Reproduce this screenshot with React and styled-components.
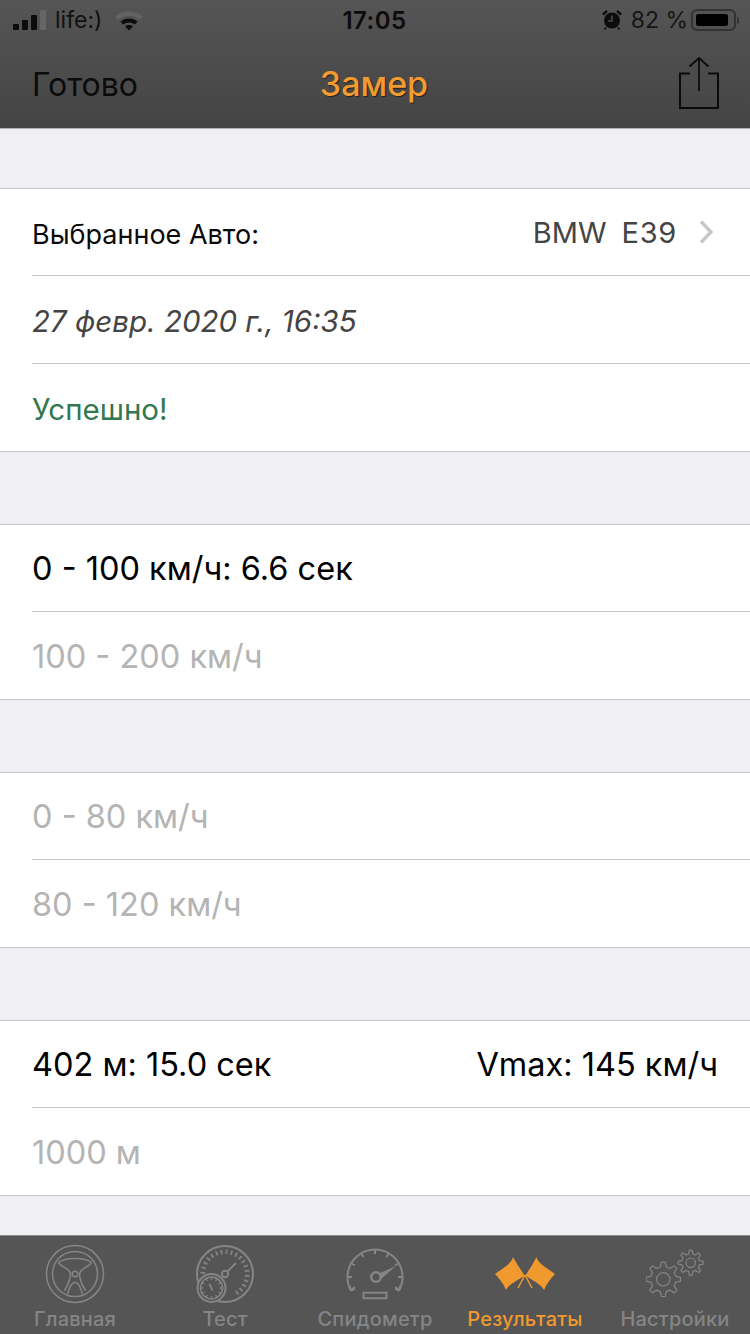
import styled, { createGlobalStyle } from "styled-components";

const GlobalStyle = createGlobalStyle`
  html, body {
    margin: 0;
    padding: 0;
    background: #efeff4;
  }
  * {
    box-sizing: border-box;
  }
`;

const polar = (cx, cy, r, deg) => {
  const a = (deg * Math.PI) / 180;
  return `${(cx + r * Math.cos(a)).toFixed(2)} ${(cy + r * Math.sin(a)).toFixed(2)}`;
};

// radial tick marks for the gauge icons
const ticks = (cx, cy, r1, r2, from, step, count) => {
  let d = "";
  for (let i = 0; i < count; i++) {
    const deg = from + i * step;
    d += `M${polar(cx, cy, r1, deg)}L${polar(cx, cy, r2, deg)}`;
  }
  return d;
};

const gear = (cx, cy, r, teeth, out) => {
  let d = "";
  const step = 360 / teeth;
  for (let i = 0; i < teeth; i++) {
    const a = i * step;
    d += `${i === 0 ? "M" : "L"}${polar(cx, cy, r, a - step * 0.3)} L${polar(cx, cy, out, a - step * 0.14)} L${polar(cx, cy, out, a + step * 0.14)} L${polar(cx, cy, r, a + step * 0.3)} `;
  }
  return d + "Z";
};

function StatusBar() {
  return (
    <Status>
      <StatusSide>
        <Signal>
          <Bar $h={6} />
          <Bar $h={10} />
          <Bar $h={15} />
          <Bar $h={20} $dim />
        </Signal>
        <Carrier>life:)</Carrier>
        <svg width="30" height="22" viewBox="0 0 30 22">
          <path d="M1 7.5C8.5 .8 21.5 .8 29 7.5L26 11C20 5.8 10 5.8 4 11Z" fill="#626262" />
          <path d="M6.5 12.7C11.5 8.4 18.5 8.4 23.5 12.7L20.8 15.6C17.3 12.8 12.7 12.8 9.2 15.6Z" fill="#0c0c0c" />
          <path d="M11 17.4C13.4 15.4 16.6 15.4 19 17.4L15 21.5Z" fill="#0c0c0c" />
        </svg>
      </StatusSide>
      <Clock>17:05</Clock>
      <StatusRight>
        <svg width="20" height="22" viewBox="0 0 20 22">
          <circle cx="10" cy="11.5" r="8" fill="#0c0c0c" />
          <path d="M10 6.5V12H6" stroke="#4b4b4b" strokeWidth="1.6" fill="none" />
          <path d="M1 5.5L5 1.8M19 5.5L15 1.8" stroke="#0c0c0c" strokeWidth="2.4" />
          <path d="M4 18.5L2.5 20.5M16 18.5L17.5 20.5" stroke="#0c0c0c" strokeWidth="1.6" />
        </svg>
        <Percent>82 %</Percent>
        <Battery>
          <BatteryFill />
        </Battery>
        <BatteryCap />
      </StatusRight>
    </Status>
  );
}

function WheelIcon() {
  return (
    <svg width="60" height="60" viewBox="0 0 60 60" fill="none" stroke="#858585" strokeWidth="1.5">
      <circle cx="30" cy="30" r="28.5" />
      <circle cx="30" cy="30" r="22.5" />
      <circle cx="30" cy="30" r="2.8" />
      <path d="M13.3 18.7C20 13 40 13 46.7 18.7" />
      <path d="M13.3 18.7C17 23 22 24 24.3 27.3C25.5 29 25.5 32 25 34C24 39 22 43 19.3 46.7" />
      <path d="M46.7 18.7C43 23 38 24 35.7 27.3C34.5 29 34.5 32 35 34C36 39 38 43 40.7 46.7" />
      <path d="M22.7 50C24 44 27 39 30 38.3C33 39 36 44 37.3 50" />
    </svg>
  );
}

function TestIcon() {
  return (
    <svg width="60" height="60" viewBox="0 0 60 60" fill="none" stroke="#858585" strokeWidth="2">
      <circle cx="30" cy="30" r="28" />
      <path d={ticks(30, 30, 20, 24.5, -190, 13, 20)} strokeWidth="1.8" />
      <circle cx="30" cy="30" r="3.2" />
      <path d="M32.5 27.5L41 19" strokeWidth="1.8" />
      <circle cx="16.5" cy="44" r="14" fill="#555" />
      <circle cx="16.5" cy="44" r="11" strokeWidth="1.5" />
      <path d={ticks(16.5, 44, 8.2, 10.5, 0, 30, 12)} strokeWidth="1.3" />
      <path d="M14.3 40L17.7 46.7" strokeWidth="1.8" />
    </svg>
  );
}

function SpeedIcon() {
  return (
    <svg width="60" height="54" viewBox="0 0 60 54" fill="none" stroke="#858585" strokeWidth="2">
      <path d="M6.2 43.75A27.5 27.5 0 1 1 53.8 43.75" />
      <path d={ticks(30, 30, 23, 27.5, -210, 30, 9)} />
      <path d="M6.2 43.75L4.5 38.5M6.2 43.75L9.5 40" />
      <path d="M53.8 43.75L55.5 38.5M53.8 43.75L50.5 40" />
      <circle cx="31" cy="30" r="4.8" strokeWidth="2.5" />
      <path d="M34 26.5L51 19L35.5 32.5Z" fill="#858585" stroke="none" />
      <rect x="18.5" y="45.7" width="23" height="5.5" />
    </svg>
  );
}

function FlagsIcon() {
  return (
    <svg width="60" height="34" viewBox="0 0 60 34">
      <g fill="#f0992e">
        <path d="M18 0C17 6 8 11 0 17C4 21 8 26 11 33C14 27 22 24 29.5 18.5C26 13 22 7 18 0Z" />
        <path d="M41.5 0C42.5 6 52 11 60 17C56 21 52 26 49 33C46 27 38 24 30.5 18.5C34 13 38 7 41.5 0Z" />
      </g>
      <path d="M30 18L37 31M30 18L23 31" stroke="#f0992e" strokeWidth="1.5" />
    </svg>
  );
}

function GearsIcon() {
  return (
    <svg width="58" height="50" viewBox="0 0 58 50" fill="none" stroke="#858585" strokeWidth="1.2">
      <path d={gear(17.3, 30.3, 12.7, 8, 17.3)} strokeLinejoin="round" />
      <circle cx="17.3" cy="30.3" r="6.7" />
      <path d={gear(44.7, 13.7, 9, 8, 12.6)} strokeLinejoin="round" />
      <circle cx="44.7" cy="13.7" r="4.7" />
    </svg>
  );
}

export default function App() {
  return (
    <Page>
      <GlobalStyle />
      <Header>
        <StatusBar />
        <Nav>
          <NavDone>Готово</NavDone>
          <NavTitle>Замер</NavTitle>
          <ShareIcon width="40" height="54" viewBox="0 0 40 54" fill="none" stroke="#0a0a0a" strokeWidth="1.7">
            <path d="M11 17.5H1V52H39V17.5H29" strokeWidth="2" />
            <path d="M20 35V2M10.5 10.5L20 2L29.5 10.5" />
          </ShareIcon>
        </Nav>
      </Header>

      <Content>
        <Group $top={59}>
          <Row>
            <SmallLabel>Выбранное Авто:</SmallLabel>
            <CarValue>
              <CarName>BMW</CarName>
              <CarModel>E39</CarModel>
              <svg width="15" height="26" viewBox="0 0 15 26" fill="none" stroke="#c7c7cc" strokeWidth="3.4">
                <path d="M2 2.5L12 13L2 23.5" />
              </svg>
            </CarValue>
          </Row>
          <Row>
            <DateText>27 февр. 2020 г., 16:35</DateText>
          </Row>
          <Row>
            <SuccessText>Успешно!</SuccessText>
          </Row>
        </Group>

        <Group>
          <Row>
            <Metric>0 - 100 км/ч: 6.6 сек</Metric>
          </Row>
          <Row>
            <Metric $off>100 - 200 км/ч</Metric>
          </Row>
        </Group>

        <Group>
          <Row>
            <Metric $off>0 - 80 км/ч</Metric>
          </Row>
          <Row>
            <Metric $off>80 - 120 км/ч</Metric>
          </Row>
        </Group>

        <Group>
          <Row>
            <Metric>402 м: 15.0 сек</Metric>
            <Metric>Vmax: 145 км/ч</Metric>
          </Row>
          <Row>
            <Metric $off>1000 м</Metric>
          </Row>
        </Group>
      </Content>

      <TabBar>
        <Tab>
          <TabIcon><WheelIcon /></TabIcon>
          <TabLabel>Главная</TabLabel>
        </Tab>
        <Tab>
          <TabIcon><TestIcon /></TabIcon>
          <TabLabel>Тест</TabLabel>
        </Tab>
        <Tab>
          <TabIcon><SpeedIcon /></TabIcon>
          <TabLabel>Спидометр</TabLabel>
        </Tab>
        <Tab>
          <TabIcon><FlagsIcon /></TabIcon>
          <TabLabel $active>Результаты</TabLabel>
        </Tab>
        <Tab>
          <TabIcon><GearsIcon /></TabIcon>
          <TabLabel>Настройки</TabLabel>
        </Tab>
      </TabBar>
    </Page>
  );
}

const font = `Inter, "Noto Sans", "Liberation Sans", sans-serif`;

const Page = styled.div`
  width: 750px;
  height: 1334px;
  display: flex;
  flex-direction: column;
  overflow: hidden;
  background: #efeff4;
  font-family: ${font};
`;

const Header = styled.header`
  height: 129px;
  flex: none;
  background: linear-gradient(#555555, #444444);
  border-bottom: 1px solid #b2b2b2;
`;

const Status = styled.div`
  height: 40px;
  display: grid;
  grid-template-columns: 1fr auto 1fr;
  align-items: center;
  padding: 0 11px 0 13px;
`;

const StatusSide = styled.div`
  display: flex;
  align-items: center;
`;

const StatusRight = styled(StatusSide)`
  justify-content: flex-end;
`;

const Signal = styled.div`
  display: flex;
  align-items: flex-end;
  gap: 3px;
  height: 20px;
  margin-right: 9px;
`;

const Bar = styled.span`
  width: 6px;
  height: ${(p) => p.$h}px;
  border-radius: 1px;
  background: ${(p) => (p.$dim ? "#666666" : "#0c0c0c")};
`;

const Carrier = styled.span`
  font-size: 23px;
  color: #111;
  margin-right: 12px;
`;

const Clock = styled.span`
  margin-left: -3px;
  font-size: 24px;
  font-weight: 600;
  color: #0c0c0c;
  letter-spacing: 0.5px;
`;

const Percent = styled.span`
  font-size: 23px;
  color: #151515;
  margin: 0 3px 0 9px;
`;

const Battery = styled.span`
  width: 45px;
  height: 22px;
  padding: 3px;
  border: 2px solid #333;
  border-radius: 6px;
`;

const BatteryFill = styled.span`
  display: block;
  width: 32px;
  height: 12px;
  border-radius: 2px;
  background: #000;
`;

const BatteryCap = styled.span`
  width: 2px;
  height: 7px;
  margin-left: 1px;
  border-radius: 0 2px 2px 0;
  background: #333;
`;

const Nav = styled.nav`
  position: relative;
  height: 88px;
  display: flex;
  align-items: center;
  justify-content: space-between;
  padding: 0 31px 0 32px;
`;

const NavDone = styled.span`
  font-size: 32px;
  color: #0b0b0b;
`;

const NavTitle = styled.span`
  position: absolute;
  left: 0;
  right: 2px;
  top: 24px;
  text-align: center;
  font-size: 34px;
  font-weight: 500;
  line-height: 40px;
  color: #f39a30;
  text-shadow: 1px 1px 1px #222;
  pointer-events: none;
`;

const ShareIcon = styled.svg`
  margin-top: -3px;
`;

const Content = styled.main`
  flex: 1;
`;

const Group = styled.section`
  margin-top: ${(p) => p.$top ?? 72}px;
  padding-left: 32px;
  background: #fff;
  border-top: 1px solid #c8c8cc;
  border-bottom: 1px solid #c8c8cc;
`;

const Row = styled.div`
  height: 88px;
  display: flex;
  align-items: center;
  justify-content: space-between;
  padding: 2px 32px 0 0;
  border-bottom: 1px solid #c8c8cc;

  &:first-child {
    height: 87px;
    padding-top: 0;
  }

  &:last-child {
    height: 87px;
    border-bottom: none;
  }
`;

const SmallLabel = styled.span`
  margin-top: 4px;
  font-size: 27px;
  color: #0a0a0a;
`;

const CarValue = styled.div`
  display: flex;
  align-items: center;
  margin-right: 4px;
`;

const CarName = styled.span`
  font-size: 29px;
  color: #444;
  margin-right: 15px;
`;

const CarModel = styled(CarName)`
  letter-spacing: 0.7px;
  margin-right: 22px;
`;

const DateText = styled.span`
  font-size: 29.5px;
  font-style: italic;
  color: #444;
`;

const SuccessText = styled.span`
  font-size: 29.5px;
  color: #33784f;
`;

const Metric = styled.span`
  font-size: 32.5px;
  color: ${(p) => (p.$off ? "#b4b4b4" : "#000")};
`;

const TabBar = styled.footer`
  height: 99px;
  flex: none;
  display: grid;
  grid-template-columns: repeat(5, 150px);
  background: #555555;
  border-top: 1px solid #8e8e8e;
`;

const Tab = styled.div`
  display: flex;
  flex-direction: column;
  align-items: center;
`;

const TabIcon = styled.div`
  height: 60px;
  display: flex;
  align-items: center;
  justify-content: center;
  margin-top: 8px;
`;

const TabLabel = styled.span`
  margin-top: 4px;
  font-size: 20px;
  font-weight: 500;
  letter-spacing: 0.2px;
  line-height: 22px;
  color: ${(p) => (p.$active ? "#f0992e" : "#858585")};
`;
